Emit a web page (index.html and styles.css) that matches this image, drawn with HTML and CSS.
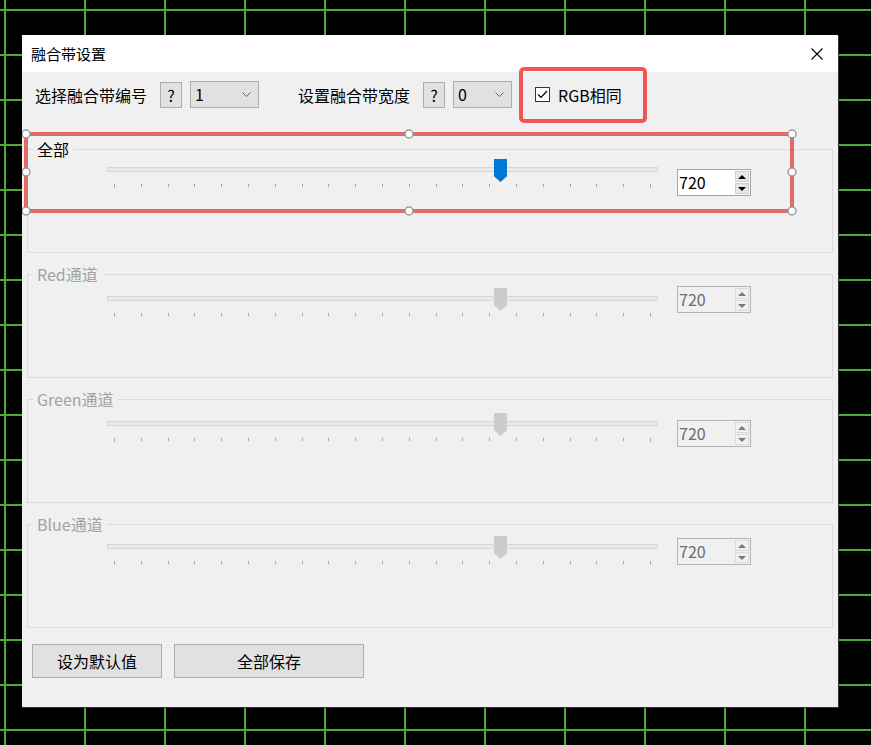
FILE: index.html
```html
<!DOCTYPE html>
<html lang="zh-CN">
<head>
  <meta charset="UTF-8" />
  <title>融合带设置</title>
  <link rel="stylesheet" href="styles.css">
</head>
<body>
  <div class="dialog">
    <div class="titlebar">
      <span class="title">融合带设置</span>
      <svg class="close" width="12" height="12" viewBox="0 0 12 12"><path d="M0.5 0.5L11.5 11.5M11.5 0.5L0.5 11.5" stroke="#000" stroke-width="1.1" fill="none"/></svg>
    </div>

    <div class="toolbar">
      <span class="label">选择融合带编号</span>
      <span class="help-btn">?</span>
      <div class="combo">
        <span>1</span>
        <svg width="9" height="5" viewBox="0 0 9 5"><path d="M0.5 0.5L4.5 4.5L8.5 0.5" stroke="#606060" fill="none"/></svg>
      </div>
      <span class="label label-gap">设置融合带宽度</span>
      <span class="help-btn">?</span>
      <div class="combo combo-narrow">
        <span>0</span>
        <svg width="9" height="5" viewBox="0 0 9 5"><path d="M0.5 0.5L4.5 4.5L8.5 0.5" stroke="#606060" fill="none"/></svg>
      </div>
      <label class="check">
        <span class="check-box">
          <svg width="13" height="13" viewBox="0 0 13 13"><path d="M2 6.5L5 9.5L11 3" stroke="#000" stroke-width="1.2" fill="none"/></svg>
        </span>
        RGB相同
      </label>
    </div>

    <fieldset class="group">
      <legend>全部</legend>
      <div class="group-body all">
        <div class="slider">
          <div class="track"><span class="thumb"></span></div>
          <div class="ticks"><i></i><i></i><i></i><i></i><i></i><i></i><i></i><i></i><i></i><i></i><i></i><i></i><i></i><i></i><i></i><i></i><i></i><i></i><i></i><i></i><i></i></div>
        </div>
        <div class="spin"><span class="spin-val">720</span><span class="spin-btns"><b class="up"></b><b class="down"></b></span></div>
      </div>
    </fieldset>

    <fieldset class="group disabled">
      <legend>Red通道</legend>
      <div class="group-body red">
        <div class="slider">
          <div class="track"><span class="thumb"></span></div>
          <div class="ticks"><i></i><i></i><i></i><i></i><i></i><i></i><i></i><i></i><i></i><i></i><i></i><i></i><i></i><i></i><i></i><i></i><i></i><i></i><i></i><i></i><i></i></div>
        </div>
        <div class="spin"><span class="spin-val">720</span><span class="spin-btns"><b class="up"></b><b class="down"></b></span></div>
      </div>
    </fieldset>

    <fieldset class="group disabled">
      <legend>Green通道</legend>
      <div class="group-body green">
        <div class="slider">
          <div class="track"><span class="thumb"></span></div>
          <div class="ticks"><i></i><i></i><i></i><i></i><i></i><i></i><i></i><i></i><i></i><i></i><i></i><i></i><i></i><i></i><i></i><i></i><i></i><i></i><i></i><i></i><i></i></div>
        </div>
        <div class="spin"><span class="spin-val">720</span><span class="spin-btns"><b class="up"></b><b class="down"></b></span></div>
      </div>
    </fieldset>

    <fieldset class="group disabled">
      <legend>Blue通道</legend>
      <div class="group-body blue">
        <div class="slider">
          <div class="track"><span class="thumb"></span></div>
          <div class="ticks"><i></i><i></i><i></i><i></i><i></i><i></i><i></i><i></i><i></i><i></i><i></i><i></i><i></i><i></i><i></i><i></i><i></i><i></i><i></i><i></i><i></i></div>
        </div>
        <div class="spin"><span class="spin-val">720</span><span class="spin-btns"><b class="up"></b><b class="down"></b></span></div>
      </div>
    </fieldset>

    <div class="actions">
      <button class="btn btn-default">设为默认值</button>
      <button class="btn btn-save">全部保存</button>
    </div>

    <!-- designer selection marks -->
    <svg class="overlay" width="816" height="672" viewBox="0 0 816 672">
      <rect x="499" y="34" width="124" height="52" rx="3" fill="none" stroke="#f05656" stroke-width="4"/>
      <rect x="4" y="99" width="766" height="77" fill="none" stroke="#f06060" stroke-width="4"/>
      <rect x="4" y="99" width="766" height="77" fill="none" stroke="#9a9a9a" stroke-width="1" stroke-dasharray="5 2"/>
      <g fill="#fff" stroke="#9a9a9a" stroke-width="1.5">
        <circle cx="4" cy="99" r="4"/>
        <circle cx="387" cy="99" r="4"/>
        <circle cx="770" cy="99" r="4"/>
        <circle cx="4" cy="137" r="4"/>
        <circle cx="770" cy="137" r="4"/>
        <circle cx="4" cy="176" r="4"/>
        <circle cx="387" cy="176" r="4"/>
        <circle cx="770" cy="176" r="4"/>
      </g>
    </svg>
  </div>
</body>
</html>
```

FILE: styles.css
```css
html, body {
  margin: 0;
  height: 100%;
}
body {
  background-color: #000;
  background-image:
    linear-gradient(to right, #4fa83a 2px, transparent 2px),
    linear-gradient(to bottom, #4fa83a 2px, transparent 2px);
  background-size: 80px 100%, 100% 45px;
  background-position: 4px 0, 0 9px;
  padding: 35px 0 0 22px;
  box-sizing: border-box;
  font-family: "Noto Sans CJK SC", sans-serif;
  font-size: 16px;
  color: #000;
  overflow: hidden;
}
.dialog {
  position: relative;
  width: 816px;
  height: 672px;
  background: #f0f0f0;
  box-shadow: 1px 1px 0 #333;
}
.titlebar {
  height: 37px;
  background: #fff;
  display: flex;
  align-items: center;
  justify-content: space-between;
  padding: 0 15px 0 9px;
}
.title {
  font-size: 15px;
  line-height: 20px;
}
.close {
  display: block;
}
.toolbar {
  display: flex;
  align-items: center;
  height: 27px;
  margin-top: 9px;
  padding-left: 13px;
  line-height: 20px;
}
.label {
  flex: none;
  width: 112px;
  white-space: nowrap;
}
.label-gap {
  margin-left: 39px;
}
.help-btn {
  flex: none;
  width: 20px;
  height: 24px;
  margin-left: 13px;
  border: 1px solid #adadad;
  background: #e1e1e1;
  text-align: center;
  line-height: 24px;
}
.combo {
  flex: none;
  width: 56px;
  height: 25px;
  margin-left: 8px;
  border: 1px solid #adadad;
  background: #e1e1e1;
  display: flex;
  align-items: center;
  justify-content: space-between;
  padding: 0 7px 0 4px;
}
.combo-narrow {
  width: 46px;
}
.combo span {
  line-height: 25px;
}
.combo svg {
  display: block;
}
.check {
  display: flex;
  align-items: center;
  margin-left: 23px;
  gap: 8px;
  white-space: nowrap;
}
.check-box {
  width: 13px;
  height: 13px;
  border: 1px solid #333;
  background: #fff;
}
.check-box svg {
  display: block;
}

.group {
  margin: 31px 0 0 5px;
  padding: 0;
  width: 806px;
  box-sizing: border-box;
  border: 1px solid #dcdcdc;
  min-width: 0;
}
.group + .group {
  margin-top: 11px;
}
.group legend {
  margin-left: 5px;
  padding: 0 4px;
  line-height: 21px;
  font-size: 16px;
}
.group.disabled legend {
  color: #a3a3a3;
}
.group-body {
  height: 92px;
  display: flex;
  align-items: flex-start;
  padding-left: 79px;
}
.slider {
  width: 551px;
}
.track {
  position: relative;
  height: 3px;
  border: 1px solid #d6d6d6;
  background: #e7eaea;
}
.thumb {
  position: absolute;
  left: 386px;
  top: -9px;
  width: 13px;
  height: 23px;
  background: #0078d7;
  clip-path: polygon(0 0, 100% 0, 100% 75%, 50% 100%, 0 75%);
}
.disabled .thumb {
  background: #cccccc;
}
.ticks {
  display: flex;
  justify-content: space-between;
  align-items: flex-start;
  width: 537px;
  margin: 12px 0 0 7px;
}
.ticks i {
  width: 1px;
  height: 3px;
  background: #a8a8a8;
}
.ticks i:first-child,
.ticks i:last-child {
  height: 4px;
}
.spin {
  display: flex;
  width: 72px;
  height: 25px;
  margin-left: 19px;
  border: 1px solid #a5a5a5;
  background: #fff;
}
.spin-val {
  flex: 1;
  padding-left: 1px;
  line-height: 25px;
}
.spin-btns {
  display: flex;
  flex-direction: column;
  width: 14px;
  margin: 1px 1px 1px 0;
  gap: 1px;
}
.spin-btns b {
  position: relative;
  flex: 1;
  background: #e6e6e6;
  border: 1px solid #d0d0d0;
}
.spin-btns b::after {
  content: "";
  position: absolute;
  left: 50%;
  top: 50%;
  margin: -2px 0 0 -4px;
  border-left: 4px solid transparent;
  border-right: 4px solid transparent;
}
.spin-btns .up::after {
  border-bottom: 4px solid #000;
}
.spin-btns .down::after {
  border-top: 4px solid #000;
}
.disabled .spin {
  background: #f0f0f0;
  border-color: #b4b4b4;
  color: #6d6d6d;
}
.disabled .spin-btns b {
  background: #f0f0f0;
  border-color: #dadada;
}
.disabled .spin-btns .up::after {
  border-bottom-color: #7a7a7a;
}
.disabled .spin-btns .down::after {
  border-top-color: #7a7a7a;
}

.all .slider { margin-top: 7px; }
.all .spin { margin-top: 9px; }
.red .slider { margin-top: 11px; }
.red .spin { margin-top: 1px; }
.green .slider { margin-top: 11px; }
.green .spin { margin-top: 10px; }
.blue .slider { margin-top: 9px; }
.blue .spin { margin-top: 3px; }

.actions {
  display: flex;
  gap: 12px;
  margin: 16px 0 0 10px;
}
.btn {
  height: 34px;
  margin: 0;
  border: 1px solid #adadad;
  background: #e1e1e1;
  font-family: inherit;
  font-size: 16px;
  color: #000;
  padding: 0;
}
.btn-default {
  width: 130px;
}
.btn-save {
  width: 190px;
}
.overlay {
  position: absolute;
  left: 0;
  top: 0;
  pointer-events: none;
}
```
